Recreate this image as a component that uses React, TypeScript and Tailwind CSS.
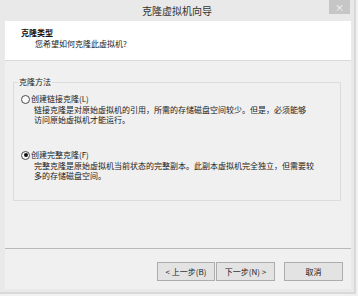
import React from "react";

const font = { fontFamily: '"Noto Sans CJK SC", "Noto Sans", sans-serif' };

function Radio({ checked }: { checked?: boolean }) {
    return (
        <span className="w-[9px] h-[9px] rounded-full border border-[#4a4a4a] bg-[#fafafa] flex items-center justify-center shrink-0">
            {checked && <span className="w-[4px] h-[4px] rounded-full bg-[#111]" />}
        </span>
    );
}

function Option({
    label,
    desc,
    checked,
}: {
    label: string;
    desc: string[];
    checked?: boolean;
}) {
    return (
        <div className="flex flex-col">
            <div className="flex items-center h-[12px] ml-[3px] gap-[1px]">
                <Radio checked={checked} />
                <span className="text-[8px] leading-[12px] text-[#1a1a1a]">{label}</span>
            </div>
            <div className="pl-[16px]">
                {desc.map((line, i) => (
                    <div key={i} className="text-[8px] leading-[10px] text-[#1a1a1a] whitespace-nowrap">
                        {line}
                    </div>
                ))}
            </div>
        </div>
    );
}

function WizButton({ children, className = "" }: { children: React.ReactNode; className?: string }) {
    return (
        <button
            className={`h-[19px] border border-[#adadad] bg-[#e3e3e3] text-[8px] text-[#1a1a1a] flex items-center justify-center ${className}`}
        >
            {children}
        </button>
    );
}

export default function App() {
    return (
        <div className="w-[358px] h-[296px] bg-[#f1f1f1]" style={font}>
            <div className="w-[356px] h-[294px] bg-[#e9e9e9] border-r-2 border-b-2 border-[#d9d9d9] flex flex-col relative">
                {/* title bar */}
                <div className="h-[21px] flex items-center justify-center text-[10px] text-[#333]">
                    克隆虚拟机向导
                </div>
                <button className="absolute right-[4px] top-0 w-[21px] h-[14px] bg-[#c6c6c6] text-white text-[9px] leading-none flex items-center justify-center">
                    ×
                </button>

                <div className="ml-[5px] w-[346px] h-[268px] bg-[#f0f0f0] flex flex-col">
                    {/* header */}
                    <div className="h-[40px] bg-white border-b border-[#d9d9d9] pt-[6px]">
                        <div className="pl-[16px] text-[8px] leading-[12px] font-bold text-[#111]">克隆类型</div>
                        <div className="pl-[30px] text-[8px] leading-[10px] text-[#1a1a1a]">您希望如何克隆此虚拟机?</div>
                    </div>

                    {/* group box */}
                    <fieldset className="mt-[15px] ml-[8px] mr-[10px] h-[125px] border border-[#dcdcdc] pl-[4px]">
                        <legend className="px-[1px] text-[8px] leading-[12px] text-[#1a1a1a]">克隆方法</legend>
                        <div className="mt-[5px] flex flex-col gap-[24px]">
                            <Option
                                label="创建链接克隆(L)"
                                desc={[
                                    "链接克隆是对原始虚拟机的引用，所需的存储磁盘空间较少。但是，必须能够",
                                    "访问原始虚拟机才能运行。",
                                ]}
                            />
                            <Option
                                checked
                                label="创建完整克隆(F)"
                                desc={[
                                    "完整克隆是原始虚拟机当前状态的完整副本。此副本虚拟机完全独立，但需要较",
                                    "多的存储磁盘空间。",
                                ]}
                            />
                        </div>
                    </fieldset>

                    {/* separator + buttons */}
                    <div className="mt-[47px] border-t border-[#b9b9b9]" />
                    <div className="pt-[13px] pr-[8px] flex justify-end">
                        <WizButton className="w-[58px]">&lt; 上一步(B)</WizButton>
                        <WizButton className="w-[59px] ml-[1px]">下一步(N) &gt;</WizButton>
                        <WizButton className="w-[59px] ml-[9px]">取消</WizButton>
                    </div>
                </div>
            </div>
        </div>
    );
}
